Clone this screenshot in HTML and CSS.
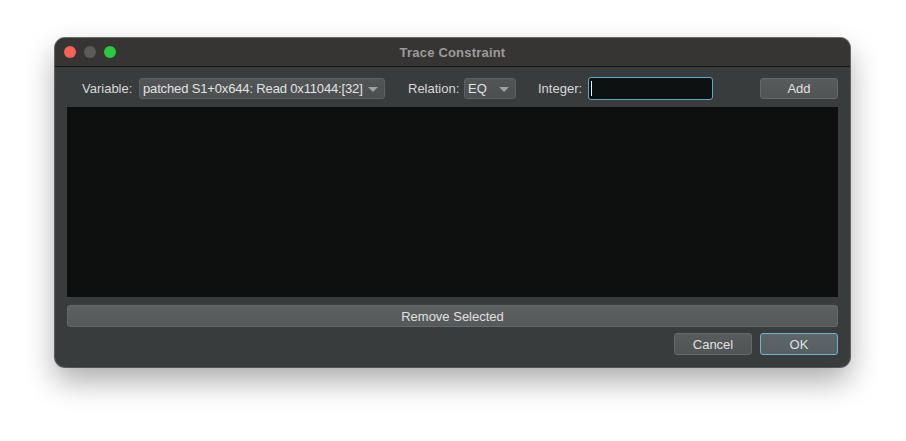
FILE: index.html
```html
<!DOCTYPE html>
<html>
<head>
<meta charset="utf-8">
<link rel="stylesheet" href="styles.css">
</head>
<body>
<div class="window">
  <div class="titlebar">
    <div class="lights">
      <span class="light red"></span>
      <span class="light gray"></span>
      <span class="light green"></span>
    </div>
    <div class="title">Trace Constraint</div>
  </div>
  <div class="content">
    <div class="toolbar">
      <span class="label l-var">Variable:</span>
      <div class="combo c-var"><span class="ctext">patched S1+0x644: Read 0x11044:[32]</span><span class="arrow"></span></div>
      <span class="label l-rel">Relation:</span>
      <div class="combo c-rel"><span class="ctext">EQ</span><span class="arrow"></span></div>
      <span class="label l-int">Integer:</span>
      <div class="input"><span class="caret"></span></div>
      <div class="spacer"></div>
      <button class="btn b-add">Add</button>
    </div>
    <div class="list"></div>
    <button class="btn b-remove">Remove Selected</button>
    <div class="footer">
      <button class="btn b-cancel">Cancel</button>
      <button class="btn b-ok">OK</button>
    </div>
  </div>
</div>
</body>
</html>
```
FILE: styles.css
```css
html, body {
  margin: 0;
  padding: 0;
  background: #ffffff;
  width: 906px;
  height: 441px;
  overflow: hidden;
}
body {
  padding: 38px 0 0 55px;
  box-sizing: border-box;
  font-family: "Liberation Sans", Arial, sans-serif;
  font-size: 13px;
  color: #dcdcdc;
}
.window {
  width: 795px;
  height: 329px;
  border-radius: 10px;
  background: #393c3d;
  box-shadow: 0 14px 30px rgba(0,0,0,0.33), 0 0 0 1px rgba(0,0,0,0.55);
  overflow: hidden;
  display: flex;
  flex-direction: column;
}
.titlebar {
  height: 28px;
  background: #363534;
  border-bottom: 1px solid #161616;
  position: relative;
  display: flex;
  align-items: center;
  justify-content: center;
  flex: none;
}
.lights {
  position: absolute;
  left: 9px;
  top: 8px;
  display: flex;
  gap: 8px;
}
.light {
  width: 12px;
  height: 12px;
  border-radius: 50%;
  display: block;
}
.red { background: #fe5f57; }
.gray { background: #5b5b5b; }
.green { background: #28c840; }
.title {
  font-weight: bold;
  color: #9b9b9b;
  font-size: 13px;
  letter-spacing: 0.2px;
}
.content {
  padding: 10px 12px 0 12px;
  display: flex;
  flex-direction: column;
}
.toolbar {
  display: flex;
  align-items: center;
  height: 23px;
}
.label {
  color: #d8d8d8;
}
.l-var { margin-left: 15px; width: 57px; }
.l-rel { margin-left: 23px; width: 56px; }
.l-int { margin-left: 22px; width: 50px; }
.combo {
  height: 21px;
  box-sizing: border-box;
  background: linear-gradient(#515556, #4b4f50);
  border: 1px solid #5d6162;
  border-radius: 3px;
  display: flex;
  align-items: center;
  padding-left: 3px;
  position: relative;
  color: #e2e2e2;
}
.c-var { width: 246px; }
.c-var .ctext { letter-spacing: -0.15px; }
.c-rel { width: 52px; }
.ctext { white-space: nowrap; }
.arrow {
  position: absolute;
  right: 6px;
  top: 8px;
  width: 0;
  height: 0;
  border-left: 5px solid transparent;
  border-right: 5px solid transparent;
  border-top: 5px solid #9fa2a3;
}
.input {
  width: 125px;
  height: 23px;
  box-sizing: border-box;
  background: #0e1111;
  border: 1px solid #5ea9c6;
  border-radius: 3px;
  display: flex;
  align-items: center;
  padding-left: 2px;
}
.caret {
  width: 1px;
  height: 15px;
  background: #f0f0f0;
}
.spacer { flex: 1; }
.btn {
  font-family: "Liberation Sans", Arial, sans-serif;
  font-size: 13px;
  color: #e0e0e0;
  background: linear-gradient(#575b5c, #505455);
  border: 1px solid #646869;
  border-radius: 3px;
  height: 21px;
  box-sizing: border-box;
  padding: 0;
  margin: 0;
}
.b-add { width: 78px; }
.list {
  margin-top: 7px;
  height: 190px;
  background: #0e1010;
  flex: none;
}
.b-remove {
  margin-top: 8px;
  width: 771px;
  height: 22px;
  background: linear-gradient(#5c6061, #56595a);
}
.footer {
  margin-top: 6px;
  display: flex;
  justify-content: flex-end;
  gap: 8px;
}
.b-cancel { width: 78px; height: 22px; }
.b-ok {
  width: 78px;
  height: 22px;
  background: linear-gradient(#5c6668, #566062);
  border-color: #6fb3cf;
}
```
